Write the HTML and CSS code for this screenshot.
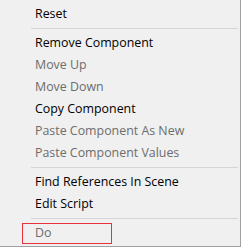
FILE: index.html
```html
<!DOCTYPE html>
<html lang="en">

<head>
    <meta charset="UTF-8">
    <title>Component Menu</title>
    <link rel="stylesheet" href="styles.css">
</head>

<body>

    <div class="menu">
        <div class="item">Reset</div>
        <div class="separator"></div>
        <div class="item">Remove Component</div>
        <div class="item disabled">Move Up</div>
        <div class="item disabled">Move Down</div>
        <div class="item">Copy Component</div>
        <div class="item disabled">Paste Component As New</div>
        <div class="item disabled">Paste Component Values</div>
        <div class="separator"></div>
        <div class="item">Find References In Scene</div>
        <div class="item">Edit Script</div>
        <div class="separator"></div>
        <div class="item disabled highlight">Do</div>
    </div>

</body>

</html>
```

FILE: styles.css
```css
body {
    font-family: 'Open Sans', 'Liberation Sans', sans-serif;
    font-size: 12.4px;
    margin: 0;
}

.menu {
    background-color: #f0f0f0;
    border-bottom: 1px solid #a0a0a0;
    border-right: 1px solid #a0a0a0;
    box-sizing: border-box;
    height: 247px;
    padding: 3px 2px 2px 0;
    width: 241px;
}

.item {
    color: #000;
    height: 22px;
    line-height: 22px;
    padding-left: 35px;
    position: relative;
}

.item.disabled {
    color: #6d6d6d;
}

.separator {
    border-top: 1px solid #d5d5d5;
    height: 0;
    margin: 3px 0 3px 31px;
}

/* red annotation box drawn over the last entry */
.highlight::after {
    border: 1px solid #e8323a;
    box-sizing: border-box;
    content: "";
    height: 21px;
    left: 22px;
    position: absolute;
    top: 1px;
    width: 90px;
}
```
